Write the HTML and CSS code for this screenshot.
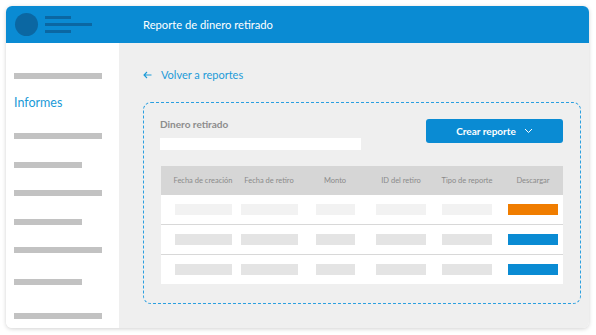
FILE: index.html
```html
<!DOCTYPE html>
<html lang="es">
<head>
  <meta charset="UTF-8" />
  <meta name="viewport" content="width=device-width, initial-scale=1.0"/>
  <title>Reporte de dinero retirado</title>
  <link rel="stylesheet" href="styles.css">
</head>
<body>
  <div class="window">
    <div class="topbar">
      <div class="brand">
        <div class="avatar"></div>
        <div class="menu-lines">
          <span class="line short"></span>
          <span class="line"></span>
          <span class="line short"></span>
        </div>
      </div>
      <div class="page-title">Reporte de dinero retirado</div>
    </div>
    <div class="body">
      <div class="sidebar">
        <span class="bar first"></span>
        <div class="nav-active">Informes</div>
        <span class="bar after-active"></span>
        <span class="bar short"></span>
        <span class="bar"></span>
        <span class="bar short"></span>
        <span class="bar"></span>
        <span class="bar short wide-gap"></span>
        <span class="bar wider-gap"></span>
      </div>
      <div class="main">
        <a class="back-link" href="#">
          <svg width="9" height="8" viewBox="0 0 9 8"><path d="M4 1 L1 4 L4 7 M1 4 H8.5" fill="none" stroke="#1d9bd8" stroke-width="1.1"/></svg>
          <span>Volver a reportes</span>
        </a>
        <div class="report-box">
          <div class="box-head">
            <div class="filter">
              <div class="filter-label">Dinero retirado</div>
              <div class="filter-input"></div>
            </div>
            <button class="create-btn">Crear reporte
              <svg width="9" height="6" viewBox="0 0 9 6"><path d="M1 1 L4.5 4.5 L8 1" fill="none" stroke="#fff" stroke-width="1"/></svg>
            </button>
          </div>
          <div class="table">
            <div class="row head">
              <span>Fecha de creación</span>
              <span>Fecha de retiro</span>
              <span>Monto</span>
              <span>ID del retiro</span>
              <span>Tipo de reporte</span>
              <span>Descargar</span>
            </div>
            <div class="row light">
              <span><i class="ph w57"></i></span>
              <span><i class="ph w57"></i></span>
              <span><i class="ph w39"></i></span>
              <span><i class="ph w50"></i></span>
              <span><i class="ph w50"></i></span>
              <span><i class="ph w50 orange"></i></span>
            </div>
            <div class="row">
              <span><i class="ph w57"></i></span>
              <span><i class="ph w57"></i></span>
              <span><i class="ph w39"></i></span>
              <span><i class="ph w50"></i></span>
              <span><i class="ph w50"></i></span>
              <span><i class="ph w50 blue"></i></span>
            </div>
            <div class="row">
              <span><i class="ph w57"></i></span>
              <span><i class="ph w57"></i></span>
              <span><i class="ph w39"></i></span>
              <span><i class="ph w50"></i></span>
              <span><i class="ph w50"></i></span>
              <span><i class="ph w50 blue"></i></span>
            </div>
          </div>
        </div>
      </div>
    </div>
  </div>
</body>
</html>
```

FILE: styles.css
```css
body {
  margin: 0;
  padding: 6px;
  background: #fff;
  font-family: Lato, "Open Sans", sans-serif;
}
.window {
  width: 583px;
  height: 322px;
  border-radius: 6px;
  overflow: hidden;
  box-shadow: 0 1px 4px rgba(0, 0, 0, 0.18);
  display: flex;
  flex-direction: column;
}
.topbar {
  height: 37px;
  background: #0a8bd3;
  display: flex;
  align-items: center;
  flex-shrink: 0;
}
.brand {
  width: 113px;
  display: flex;
  align-items: center;
  padding-left: 9px;
  box-sizing: border-box;
  gap: 7px;
}
.avatar {
  width: 23px;
  height: 23px;
  border-radius: 50%;
  background: #0b67a2;
}
.menu-lines {
  display: flex;
  flex-direction: column;
  gap: 4.5px;
}
.line {
  display: block;
  width: 47px;
  height: 2.5px;
  background: #0b67a2;
}
.line.short {
  width: 26px;
}
.page-title {
  padding-left: 24px;
  color: #fff;
  font-size: 11.2px;
}
.body {
  flex: 1;
  display: flex;
}
.sidebar {
  width: 113px;
  background: #fff;
  padding-left: 8px;
  box-sizing: border-box;
  display: flex;
  flex-direction: column;
  align-items: flex-start;
}
.bar {
  display: block;
  width: 88px;
  height: 6px;
  background: #c2c2c2;
  margin-top: 22.5px;
}
.bar.short {
  width: 68px;
}
.bar.first {
  margin-top: 30px;
}
.bar.after-active {
  margin-top: 22px;
}
.bar.wide-gap {
  margin-top: 26px;
}
.bar.wider-gap {
  margin-top: 28px;
}
.nav-active {
  margin-top: 16px;
  color: #1a9ad7;
  font-size: 12.5px;
  line-height: 16px;
}
.main {
  flex: 1;
  background: #efefef;
  padding: 25px 8px 0 24px;
}
.back-link {
  display: flex;
  align-items: center;
  gap: 9px;
  color: #1d9bd8;
  text-decoration: none;
  font-size: 11px;
  line-height: 14px;
}
.report-box {
  margin-top: 20px;
  height: 202px;
  box-sizing: border-box;
  border: 1px dashed #2a9fe0;
  border-radius: 8px;
  padding: 16px 17px 0 16px;
}
.box-head {
  display: flex;
  justify-content: space-between;
  align-items: flex-start;
}
.filter-label {
  color: #8c8c8c;
  font-weight: 700;
  font-size: 10px;
  line-height: 10px;
}
.filter-input {
  margin-top: 9px;
  width: 201px;
  height: 12px;
  background: #fff;
}
.create-btn {
  width: 137px;
  height: 24px;
  border: none;
  border-radius: 3px;
  background: #0a8bd3;
  color: #fff;
  font-family: inherit;
  font-weight: 700;
  font-size: 10px;
  display: flex;
  align-items: center;
  justify-content: center;
  gap: 8px;
  padding: 0;
}
.table {
  margin-top: 16px;
  margin-left: 1px;
  width: 402px;
}
.row {
  display: grid;
  grid-template-columns: repeat(6, 66px);
  padding-left: 9px;
  height: 29px;
  align-items: center;
  background: #fff;
  border-top: 1px solid #d8d8d8;
}
.row span {
  display: flex;
  justify-content: center;
}
.row.head {
  background: #d6d6d6;
  border-top: none;
  color: #8a8a8a;
  font-size: 7.5px;
  white-space: nowrap;
}
.row.light {
  border-top: none;
}
.ph {
  display: block;
  height: 11px;
  background: #e4e4e4;
}
.row.light .ph {
  background: #f2f2f2;
}
.w57 { width: 57px; }
.w39 { width: 39px; }
.w50 { width: 50px; }
.row .ph.orange { background: #f07d00; }
.row .ph.blue { background: #0a8bd3; }
```
